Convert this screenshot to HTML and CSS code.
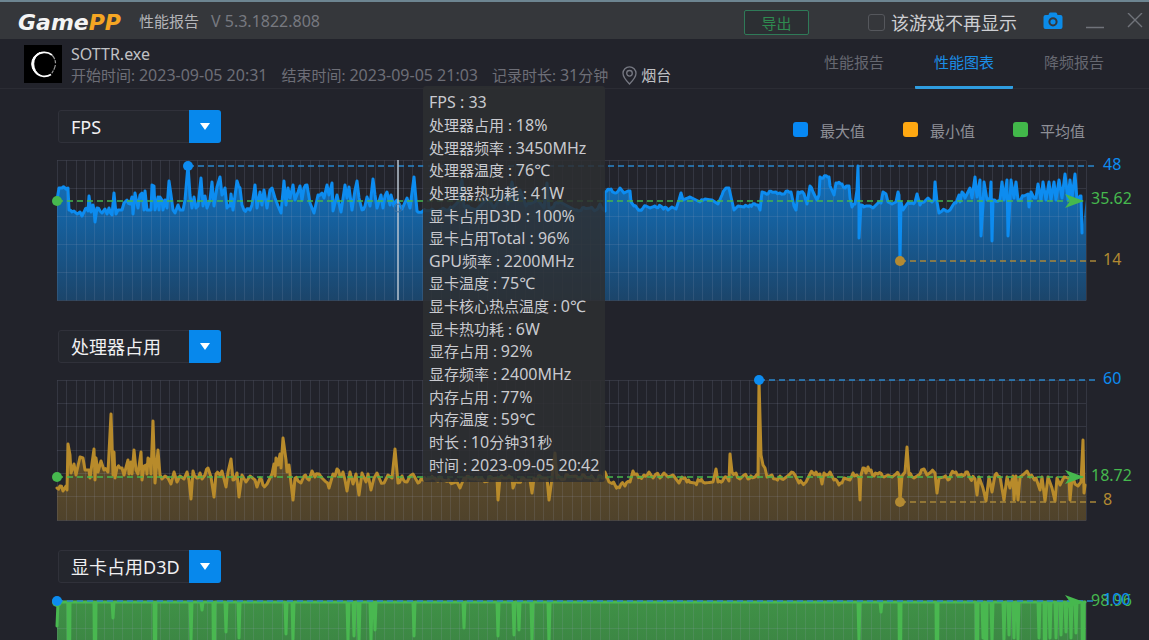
FILE: index.html
```html
<!DOCTYPE html>
<html lang="zh-CN">
<head>
<meta charset="utf-8">
<title>GamePP 性能报告</title>
<link rel="stylesheet" href="styles.css">
</head>
<body>
<header class="titlebar">
  <span class="logo">Game<span class="logo-accent">PP</span></span>
  <h1 class="title">性能报告</h1>
  <span class="version">V 5.3.1822.808</span>
  <button class="export" type="button">导出</button>
  <label class="dismiss"><input class="dismiss-box" type="checkbox">该游戏不再显示</label>
  <button class="icon-button camera" type="button" aria-label="截图">
    <svg width="20" height="18" viewBox="0 0 20 18"><path fill="#0b8be8" fill-rule="evenodd" d="M6 1.500Q6.300 .5 7.500 .5H12.500Q13.700 .5 14 1.500L14.500 3H17.500Q19.500 3 19.500 5V15Q19.500 17 17.500 17H2.500Q.5 17 .5 15V5Q.5 3 2.500 3H5.500ZM10 5.200A4.600 4.600 0 1 0 10 14.400A4.600 4.600 0 1 0 10 5.200ZM10 7.200A2.600 2.600 0 1 1 10 12.400A2.600 2.600 0 1 1 10 7.200Z"/></svg>
  </button>
  <button class="icon-button minimise" type="button" aria-label="最小化">
    <svg width="18" height="16" viewBox="0 0 18 16"><path d="M0 12.500H18" stroke="#70737a" stroke-width="1.500"/></svg>
  </button>
  <button class="icon-button close" type="button" aria-label="关闭">
    <svg width="16" height="20" viewBox="0 0 16 20"><path d="M1 0L15 14M15 0L1 14" stroke="#70737a" stroke-width="1.400"/></svg>
  </button>
</header>

<section class="session">
  <svg class="game-icon" width="38" height="38" viewBox="0 0 38 38">
    <rect width="38" height="38" fill="#000"/>
    <path d="M28 10A12 12 0 1 0 27 29.500" fill="none" stroke="#fff" stroke-width="1.600"/>
    <path d="M16 7.500A12 12 0 0 0 16 30.300A13.500 13.500 0 0 1 16 7.500Z" fill="#fff" stroke="#fff"/>
    <path d="M28 10Q31.500 14 31.500 18.500T27 29.500" fill="none" stroke="#999" stroke-width="1.200" stroke-dasharray="5 1 3 2"/>
  </svg>
  <div class="session-text">
    <div class="game-name">SOTTR.exe</div>
    <div class="session-meta">
      <span>开始时间: <span class="figure">2023-09-05 20:31</span></span>
      <span>结束时间: <span class="figure">2023-09-05 21:03</span></span>
      <span>记录时长: <span class="figure">31</span>分钟</span>
      <span class="place">
        <svg width="15" height="19" viewBox="0 0 15 19" fill="none" stroke="#777983" stroke-width="1.300"><path d="M7.500 18Q1 11.500 1 7.300A6.500 6.500 0 0 1 14 7.300Q14 11.500 7.500 18Z"/><circle cx="7.500" cy="7.300" r="2.800"/></svg>
        烟台
      </span>
    </div>
  </div>
  <nav class="tabs">
    <a class="tab" href="#report">性能报告</a>
    <a class="tab tab-active" href="#charts" aria-current="page">性能图表</a>
    <a class="tab" href="#throttle">降频报告</a>
  </nav>
</section>

<main class="charts">
  <section class="panel">
    <div class="panel-head">
      <div class="picker">
        <select class="picker-select" aria-label="图表一指标"><option>FPS</option></select>
        <span class="picker-arrow"></span>
      </div>
      <ul class="legend">
        <li class="legend-item"><span class="swatch swatch-max"></span>最大值</li>
        <li class="legend-item"><span class="swatch swatch-min"></span>最小值</li>
        <li class="legend-item"><span class="swatch swatch-avg"></span>平均值</li>
      </ul>
    </div>
    <svg class="chart chart-blue" id="fps" viewBox="0 0 1149 160" role="img" aria-label="FPS"></svg>
  </section>
  <section class="panel">
    <div class="panel-head">
      <div class="picker">
        <select class="picker-select" aria-label="图表二指标"><option>处理器占用</option></select>
        <span class="picker-arrow"></span>
      </div>
    </div>
    <svg class="chart chart-gold" id="cpu" viewBox="0 0 1149 160" role="img" aria-label="处理器占用"></svg>
  </section>
  <section class="panel">
    <div class="panel-head">
      <div class="picker">
        <select class="picker-select" aria-label="图表三指标"><option>显卡占用D3D</option></select>
        <span class="picker-arrow"></span>
      </div>
    </div>
    <svg class="chart chart-green" id="gpu" viewBox="0 0 1149 160" role="img" aria-label="显卡占用D3D"></svg>
  </section>

  <div class="tooltip" role="tooltip">
    <div><span class="figure">FPS : 33</span></div>
    <div>处理器占用 : <span class="figure">18%</span></div>
    <div>处理器频率 : <span class="figure">3450MHz</span></div>
    <div>处理器温度 : <span class="figure">76℃</span></div>
    <div>处理器热功耗 : <span class="figure">41W</span></div>
    <div>显卡占用<span class="figure">D3D : 100%</span></div>
    <div>显卡占用<span class="figure">Total : 96%</span></div>
    <div><span class="figure">GPU</span>频率 : <span class="figure">2200MHz</span></div>
    <div>显卡温度 : <span class="figure">75℃</span></div>
    <div>显卡核心热点温度 : <span class="figure">0℃</span></div>
    <div>显卡热功耗 : <span class="figure">6W</span></div>
    <div>显存占用 : <span class="figure">92%</span></div>
    <div>显存频率 : <span class="figure">2400MHz</span></div>
    <div>内存占用 : <span class="figure">77%</span></div>
    <div>内存温度 : <span class="figure">59℃</span></div>
    <div>时长 : <span class="figure">10</span>分钟<span class="figure">31</span>秒</div>
    <div>时间 : <span class="figure">2023-09-05 20:42</span></div>
  </div>
</main>
<script src="charts.js"></script>
</body>
</html>
```
FILE: styles.css
```css
* {
  box-sizing: border-box;
}

body {
  margin: 0;
  height: 100vh;
  display: flex;
  flex-direction: column;
  overflow: hidden;
  background: #22232b;
  color: #8f9097;
  font: 15px/20px "Noto Sans", "Noto Sans CJK SC", sans-serif;
}

button,
select {
  font: inherit;
}

.figure {
  font-size: 16px;
}

/* Title bar */
.titlebar {
  flex: none;
  display: flex;
  align-items: center;
  height: 39px;
  padding: 4px 6px 0 18px;
  border-top: 2px solid #6d8591;
  background: #35373b;
}

.logo {
  color: #f4f4f4;
  font: italic bold 22px/30px "DejaVu Sans", sans-serif;
}

.logo-accent {
  color: #f5a623;
}

.title {
  margin: 0 0 4px 18px;
  color: #b4b5b9;
  font-size: 15px;
  font-weight: 400;
}

.version {
  margin: 0 0 4px 12px;
  color: #777980;
  font-size: 16px;
}

.export {
  width: 65px;
  height: 25px;
  margin-left: auto;
  padding: 0;
  border: 1px solid #2f7a58;
  border-radius: 2px;
  background: #2c2f33;
  color: #2f8a50;
  line-height: 20px;
}

.dismiss {
  display: flex;
  align-items: center;
  gap: 6px;
  margin-left: 59px;
  color: #cdced2;
  font-size: 18px;
}

.dismiss-box {
  appearance: none;
  width: 17px;
  height: 17px;
  margin: 0;
  border: 1px solid #55575c;
  border-radius: 3px;
}

.icon-button {
  display: flex;
  padding: 0;
  border: 0;
  background: none;
}

.camera {
  margin-left: 26px;
  padding-bottom: 3px;
}

.minimise {
  margin-left: 23px;
}

.close {
  margin-left: 23px;
}

/* Session summary */
.session {
  flex: none;
  display: flex;
  height: 50px;
  padding: 0 26px 0 24px;
  border-bottom: 1px solid #2b2c34;
}

.game-icon {
  flex: none;
  margin-top: 6px;
}

.session-text {
  margin: 5px 0 0 9px;
}

.game-name {
  color: #c0c1c5;
  font-size: 16px;
}

.session-meta {
  display: flex;
  gap: 14px;
  line-height: 22px;
  color: #6d6e77;
  white-space: nowrap;
}

.place {
  display: flex;
  align-items: center;
  gap: 4px;
  color: #c0c1c5;
}

.tabs {
  display: flex;
  gap: 12px;
  margin-left: auto;
}

.tab {
  width: 98px;
  height: 50px;
  padding-top: 13px;
  border-bottom: 3px solid transparent;
  color: #666871;
  text-align: center;
  text-decoration: none;
}

.tab-active {
  border-color: #2f9de0;
  border-radius: 1px;
  color: #1b8de6;
}

/* Chart panels */
.charts {
  position: relative;
  flex: 1;
  padding-top: 21px;
}

.panel {
  margin-bottom: 20px;
}

.panel-head {
  display: flex;
  justify-content: space-between;
  padding: 0 64px 0 58px;
}

.picker {
  display: grid;
  grid-template-columns: 1fr 32px;
  width: 163px;
  height: 33px;
}

.picker-select {
  grid-area: 1 / 1 / 2 / 3;
  appearance: none;
  padding: 0 0 0 12px;
  border: 1px solid #30313a;
  border-radius: 3px;
  background: #24262d;
  color: #f0f0f2;
  font-size: 18px;
}

.picker-arrow {
  grid-area: 1 / 2;
  display: grid;
  place-items: center;
  border-radius: 0 3px 3px 0;
  background: #0788ec;
  pointer-events: none;
}

.picker-arrow::after {
  content: "";
  border: solid transparent;
  border-width: 7px 5px 0;
  border-top-color: #fff;
}

.legend {
  display: flex;
  gap: 38px;
  margin: 0;
  padding: 10px 0 0;
  list-style: none;
}

.legend-item {
  display: flex;
  gap: 12px;
  line-height: 23px;
}

.swatch {
  width: 15px;
  height: 15px;
  margin-top: 2px;
  border-radius: 3px;
}

.swatch-max {
  background: #0788f4;
}

.swatch-min {
  background: #ffa812;
}

.swatch-avg {
  background: #42b84a;
}

.chart {
  display: block;
  width: 100%;
  margin-top: 7px;
  overflow: visible;
  font-size: 16px;
}

.chart-blue {
  --line: #0d8cf0;
}

.chart-gold {
  --line: #b88b2b;
}

.chart-green {
  --line: #49b850;
}

.series {
  fill: none;
  stroke: var(--line);
  stroke-width: 3;
  stroke-linejoin: round;
  stroke-linecap: round;
}

.stop {
  stop-color: var(--line);
}

.grid {
  fill: none;
  stroke: #a0a8c0;
  stroke-opacity: 0.15;
}

.rule {
  fill: none;
  stroke-width: 1.4;
  stroke-dasharray: 6 4;
}

.max {
  fill: #0d8cf0;
}

.avg {
  fill: #46b84e;
}

.min {
  fill: #b38a32;
}

.rule.max {
  stroke: #2a86cc;
}

.rule.avg {
  stroke: #46b84e;
}

.rule.min {
  stroke: #a8873a;
}

.cursor {
  fill: none;
  stroke: #b9c4d0;
  stroke-width: 1.5;
}

.cursor-dot {
  fill: none;
  stroke: #3d6f9f;
}

/* Reading at the cursor */
.tooltip {
  position: absolute;
  top: -3px;
  left: 423px;
  display: grid;
  grid-auto-rows: 1fr;
  align-items: center;
  width: 182px;
  height: 396px;
  padding: 5px 6px 6px;
  border-radius: 3px;
  background: rgba(45, 46, 49, 0.86);
  color: #c9cacf;
  white-space: nowrap;
}
```
FILE: charts.js
```js
const LEFT = 57;
const RIGHT = 1086;
const TOP = 10.5;
const BOTTOM = 150.5;

const fps = `57,50 59,38 68,38 69,60 74,61 76,63 80,62 82,66 84,62 87,58 88,61 89,46 91,62 93,55 94,60 95,72 97,58 100,61 102,63 105,59 107,64 109,58 112,65 114,43 116,64 118,60 122,60 124,53 127,50 130,54 132,47 133,64 135,43 138,58 140,45 142,43 144,60 145,41 147,60 151,60 152,35 154,36 155,60 158,47 159,60 160,47 162,50 163,60 165,50 167,58 169,31 171,45 173,60 175,63 178,55 180,60 183,60 185,50 188,15 190,45 192,58 194,47 196,58 198,56 201,28 203,56 205,46 207,58 210,50 212,32 214,56 217,37 220,27 222,45 225,38 227,58 230,56 231,44 233,60 237,31 240,38 242,55 244,60 250,60 252,55 255,35 257,58 260,42 262,55 264,40 267,58 270,40 272,38 275,48 278,56 281,63 284,31 286,55 288,38 290,48
293,35 295,50 298,42 300,36 302,50 304,38 307,35 310,53 314,63 318,45 322,43 324,48 327,35 329,45 332,33 333,61 337,45 341,62 345,35 347,48 349,37 352,60 355,40 357,31 359,48 362,60 365,56 367,47 370,56 373,29 375,45 377,58 381,45 383,58 385,46 387,42 390,55 391,45 394,56 397,50 402,59 407,48 410,58 414,27 417,61 423,61 440,60 452,58 458,52 462,30 464,56 476,60 488,48 494,58 502,44 508,54 512,32 515,50 520,40 526,56 538,50 544,58 547,33 549,58 560,52 575,60 590,58 596,60 600,54
605,61 605,42 611,39 615,43 620,38 624,43 628,41 630,41 631,52 634,56 637,58 640,60 643,58 646,56 650,58 655,56 662,57 668,60 672,57 676,59 679,50 681,43 683,50 690,47 696,50 700,52 705,49 712,50 718,54 722,45 726,38 729,38 731,47 734,60 738,56 744,57 750,55 758,55 760,60 762,42 765,43 776,42 780,43 791,42 794,56 796,60 798,42 801,42 804,44 807,54 810,36 813,42 817,50 819,45 820,27 829,27 830,36 834,45 836,33 842,34 845,38 849,36 850,48 852,57 855,54 857,40 858,16 859,60 859,88 861,55 866,56 870,56 873,58 878,53 881,53 883,42
886,44 888,52 892,54 896,52 898,42 899,45 900,111 901,52 903,60 907,54 912,53 915,52 917,44 920,55 924,52 928,48 932,52 934,50 935,32 937,52 939,63 942,61 945,60 950,60 953,55 956,53 959,45 960,52 962,42 965,48 970,38 972,48 975,27 977,47 980,30 981,86 983,55 984,32 987,50 990,48 991,32 992,91 993,50 1000,50 1002,32 1004,50 1007,30 1008,86 1010,50 1011,30 1014,48 1016,32 1018,50 1024,46 1028,44 1029,57 1031,42 1034,48 1036,48 1038,34 1041,50 1043,32 1046,50 1049,32 1051,50 1054,32 1056,50 1059,30 1062,48 1065,24 1068,50 1070,30 1072,48 1075,24 1077,50 1080,46 1081,46 1082,83`;

const cpu = `57,118 60,116 63,121 66,116 67,120 68,74 70,85 71,103 74,94 76,105 80,87 83,88 85,100 89,100 90,108 94,79 95,110 96,88 98,102 101,91 104,100 108,102 111,44 113,105 114,82 115,108 117,98 122,98 124,105 128,90 129,104 131,92 132,104 134,80 136,100 138,104 141,82 142,110 144,96 146,95 147,104 148,88 150,90 151,104 153,51 155,113 158,80 160,105 162,109 165,106 168,108 171,114 174,102 177,112 180,106 184,109 187,102 189,110 191,129 193,101 197,108 200,103 202,109 205,105 208,98 211,107 214,127 216,104 220,105 222,101 226,117 228,102 231,89 233,110 237,103 239,127 242,105 246,112 250,106 255,110 257,117 260,108 263,115 267,114 272,104 274,94 275,106 276,88 278,95 280,84 281,98 283,68 286,90 287,102 289,95 291,113 293,130
295,108 298,111 301,113 304,106 309,110 312,101 315,107 319,104 322,108 326,112 329,118 333,104 335,106 337,99 340,106 343,102 345,110 347,121 350,102 353,114 356,104 359,125 362,103 366,112 368,104 371,120 374,108 377,103 380,110 384,113 388,105 392,108 395,79 398,113 402,106 407,112 410,106 413,104 418,113 423,110 435,108 450,112 456,110 460,118 464,108 480,110 497,108 498,130 500,108 512,108 513,118 516,110 530,110 532,123 534,108 547,108 549,130 552,108 555,83 557,108 575,106 590,108 604,108
605,102 609,112 615,115 618,117 621,114 625,116 630,112 633,101 637,104 640,107 644,105 649,102 653,108 656,104 660,108 664,103 668,107 673,105 679,113 682,107 687,112 695,113 700,111 705,113 713,112 716,99 718,112 724,108 729,111 730,84 732,102 736,103 740,109 744,105 748,109 755,107 758,107 759,10 761,85 763,95 765,98 767,107 772,105 776,109 780,106 785,108 790,104 795,105 799,113 806,112 810,104 816,102 820,104 822,114 824,103 830,102 834,110 839,115 844,108 850,110 853,103 857,105 859,108 860,130 861,105 863,98 866,103 868,97
871,100 874,106 878,104 884,107 888,105 892,107 896,104 899,105 900,131 902,106 905,102 907,77 909,105 914,108 920,104 924,99 927,105 931,102 935,103 937,123 939,108 944,107 948,110 951,104 956,102 960,105 966,102 970,108 975,109 977,125 979,107 983,118 986,131 989,107 992,122 995,105 1000,107 1004,130 1007,107 1010,118 1013,106 1014,130 1016,106 1018,130 1020,107 1024,104 1027,101 1030,107 1036,108 1040,120 1042,107 1045,131 1048,107 1052,118 1055,131 1057,108 1060,115 1064,107 1069,108 1070,130 1072,108 1075,114 1078,116 1081,112 1083,70 1084,123 1085,115`;

const gpuDips = `69,150 95,150 113,28 155,150 191,50 202,20 214,150 226,42 239,48 286,44 293,49 348,51 354,46 359,52 371,51 375,40 414,46 464,38 498,46 514,45 519,40 532,52 549,54 859,51 881,22 900,150 937,150 977,150 983,48 986,150 992,53 1004,49 1009,45 1014,48 1018,49 1039,48 1045,150 1050,48 1056,48 1061,45 1066,42 1071,48 1076,43 1083,150`;

function parse(text) {
  return text.trim().split(/\s+/).map(pair => pair.split(',').map(Number));
}

const gpu = [[57, 36], [58, 12]];
for (const [x, y] of parse(gpuDips)) {
  gpu.push([x - 1, 12], [x, y], [x + 1, 12]);
}
gpu.push([1085, 12]);

// Fills in the readings between two points of a level stretch, which flicker by one step.
function sample(points, step) {
  const out = [];
  const flicker = [0, 1, -1, 0, 1, 0, -1, 1, 0, 0, -1];
  points.forEach(([x, y], i) => {
    out.push([x, y]);
    const after = points[i + 1];
    if (after && Math.abs(after[1] - y) < 8) {
      for (let sx = x + 1.5; sx < after[0] - 1; sx += 1.5) {
        const base = y + (after[1] - y) * (sx - x) / (after[0] - x);
        out.push([sx, base + step * flicker[Math.round(sx * 2) % flicker.length]]);
      }
    }
  });
  return out;
}

function grid(rows) {
  let d = '';
  for (let i = 0; i <= 110; i++) {
    d += `M${Math.round(LEFT + i * (RIGHT - LEFT) / 110) + 0.5} ${TOP}V${BOTTOM}`;
  }
  for (let i = 0; i <= rows; i++) {
    d += `M${LEFT} ${Math.round(TOP + i * (BOTTOM - TOP) / rows) - 0.5}H${RIGHT}`;
  }
  return `<path class="grid" d="${d}"/>`;
}

function level(kind, x, y, label, labelX, labelY) {
  const end = kind === 'avg' ? RIGHT : RIGHT + 11;
  return `<path class="rule ${kind}" d="M${x} ${y}H${end}"/>` +
    `<circle class="${kind}" cx="${x}" cy="${y}" r="5"/>` +
    `<text class="${kind}" x="${labelX}" y="${labelY}">${label}</text>`;
}

function arrow(y) {
  return `<path class="avg" d="M1065 ${y - 7}L1084 ${y}L1065 ${y + 7}L1070 ${y}Z"/>`;
}

function draw(id, points, rows, opacity, levels, extra = '') {
  const line = points.map(point => point.join(',')).join(' ');
  const shore = points[points.length - 4][1];
  document.getElementById(id).innerHTML =
    `<defs><linearGradient id="${id}-fill" gradientUnits="userSpaceOnUse" x1="0" y1="${TOP}" x2="0" y2="${BOTTOM}">` +
    `<stop class="stop" offset="0" stop-opacity="${opacity[0]}"/>` +
    `<stop class="stop" offset="1" stop-opacity="${opacity[1]}"/></linearGradient></defs>` +
    `<polygon fill="url(#${id}-fill)" points="${LEFT},${BOTTOM} ${line} ${RIGHT},${shore} ${RIGHT},${BOTTOM}"/>` +
    grid(rows) + `<polyline class="series" points="${line}"/>` + levels + extra;
}

draw('fps', sample(parse(fps), 1.3), 5, [0.78, 0.32],
  level('max', 188, 16, '48', 1103, 20) +
  level('avg', 57, 51, '35.62', 1091, 54) +
  level('min', 900, 111, '14', 1103, 115),
  arrow(51) + `<path class="cursor" d="M398 10V150"/><circle class="cursor-dot" cx="398" cy="58" r="4"/>`);

draw('cpu', sample(parse(cpu), 2.2), 6, [0.5, 0.3],
  level('max', 759, 10, '60', 1103, 14) +
  level('avg', 57, 107, '18.72', 1091, 111) +
  level('min', 900, 132, '8', 1103, 135),
  arrow(107));

draw('gpu', gpu, 5, [0.74, 0.5],
  level('avg', 57, 12, '98.96', 1091, 16) +
  level('max', 57, 11, '100', 1103, 15),
  arrow(12));
```
